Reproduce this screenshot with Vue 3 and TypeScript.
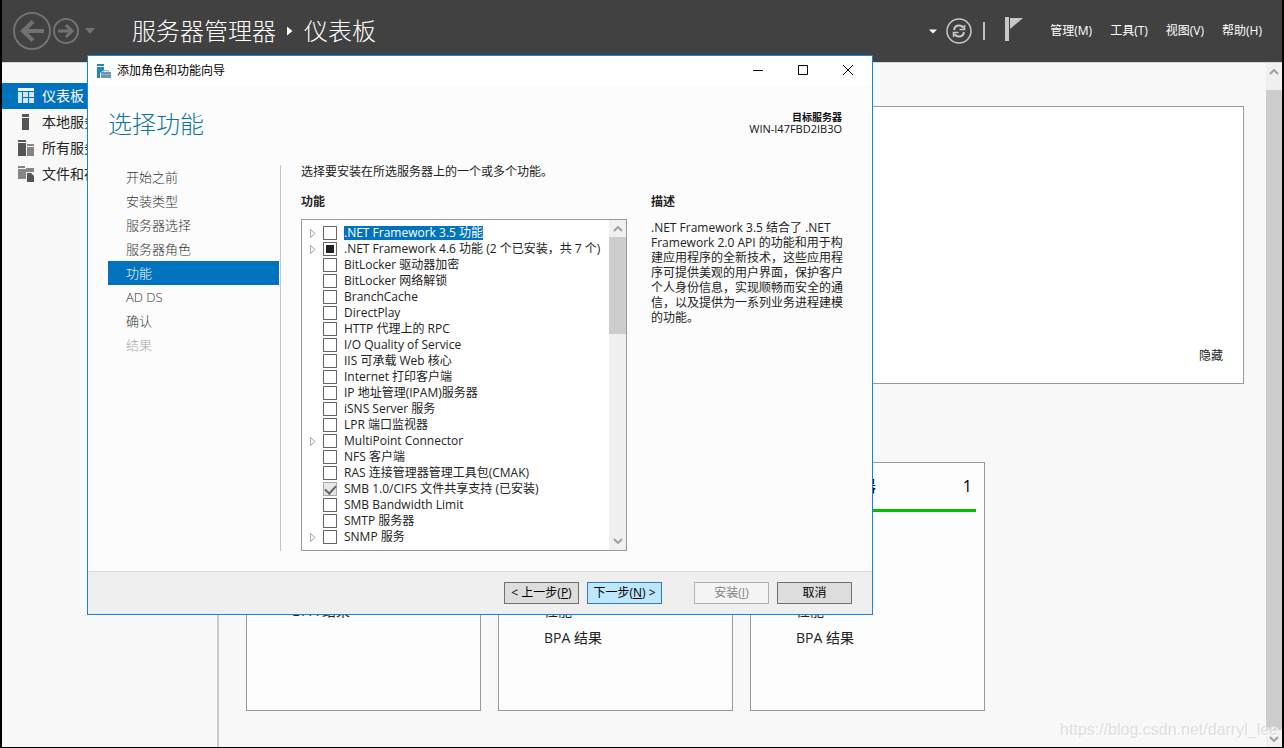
<script setup lang="ts">
interface Feature {
  label: string
  expandable?: boolean
  state?: 'partial' | 'installed'
  selected?: boolean
}

interface Card {
  id: string
  title?: string
  count?: number
  rows: string[]
}

const sidebarItems = [
  { label: '仪表板', icon: 'dashboard', active: true },
  { label: '本地服务器', icon: 'local', active: false },
  { label: '所有服务器', icon: 'all', active: false },
  { label: '文件和存储服务', icon: 'files', active: false },
]

const menus = ['管理(M)', '工具(T)', '视图(V)', '帮助(H)']

const cards: Card[] = [
  { id: 'storage', rows: ['BPA 结果'] },
  { id: 'local', rows: ['性能', 'BPA 结果'] },
  { id: 'all', title: '所有服务器', count: 1, rows: ['性能', 'BPA 结果'] },
]

const steps = [
  { label: '开始之前' },
  { label: '安装类型' },
  { label: '服务器选择' },
  { label: '服务器角色' },
  { label: '功能', current: true },
  { label: 'AD DS' },
  { label: '确认' },
  { label: '结果', disabled: true },
]

const features: Feature[] = [
  { label: '.NET Framework 3.5 功能', expandable: true, selected: true },
  { label: '.NET Framework 4.6 功能 (2 个已安装，共 7 个)', expandable: true, state: 'partial' },
  { label: 'BitLocker 驱动器加密' },
  { label: 'BitLocker 网络解锁' },
  { label: 'BranchCache' },
  { label: 'DirectPlay' },
  { label: 'HTTP 代理上的 RPC' },
  { label: 'I/O Quality of Service' },
  { label: 'IIS 可承载 Web 核心' },
  { label: 'Internet 打印客户端' },
  { label: 'IP 地址管理(IPAM)服务器' },
  { label: 'iSNS Server 服务' },
  { label: 'LPR 端口监视器' },
  { label: 'MultiPoint Connector', expandable: true },
  { label: 'NFS 客户端' },
  { label: 'RAS 连接管理器管理工具包(CMAK)' },
  { label: 'SMB 1.0/CIFS 文件共享支持 (已安装)', state: 'installed' },
  { label: 'SMB Bandwidth Limit' },
  { label: 'SMTP 服务器' },
  { label: 'SNMP 服务', expandable: true },
]
</script>

<template>
  <div class="desktop">
    <header class="topbar">
      <button class="plain" type="button" aria-label="后退">
        <svg width="38" height="38" viewBox="0 0 38 38" fill="none" stroke="#727272">
          <circle cx="19" cy="19" r="18" stroke-width="2" />
          <path d="M31 19H10M20 9.500L10 19l10 9.500" stroke-width="4" />
        </svg>
      </button>
      <button class="plain forward" type="button" aria-label="前进">
        <svg width="26" height="26" viewBox="0 0 26 26" fill="none" stroke="#727272">
          <circle cx="13" cy="13" r="12" stroke-width="2" />
          <path d="M5 13h14M13 7l6 6-6 6" stroke-width="3" />
        </svg>
      </button>
      <button class="plain history" type="button" aria-label="历史记录">
        <svg width="10" height="6" viewBox="0 0 10 6"><path d="M0 0h10L5 6z" fill="#727272" /></svg>
      </button>
      <h1 class="crumbs">
        <span>服务器管理器</span>
        <svg width="6" height="10" viewBox="0 0 6 10"><path d="M0 0.500L5.500 5 0 9.500z" fill="#fff" /></svg>
        <span>仪表板</span>
      </h1>
      <div class="tools">
        <button class="plain" type="button" aria-label="刷新选项">
          <svg width="8" height="5" viewBox="0 0 8 5"><path d="M0 0.500h8L4 4.500z" fill="#fff" /></svg>
        </button>
        <button class="plain refresh" type="button" aria-label="刷新">
          <svg width="26" height="26" viewBox="0 0 26 26" fill="none" stroke="#c8c8c8">
            <circle cx="13" cy="13" r="12" stroke-width="1.500" />
            <path d="M8 12c.5-3 2.500-4.500 5-4.500 2 0 3.500.8 4.500 2.500M18 14c-.5 3-2.500 4.500-5 4.500-2 0-3.500-.8-4.500-2.500" stroke-width="2" />
            <path d="M18.500 7v4.500h-5M7.500 19v-4.500h5" stroke-width="1.500" />
          </svg>
        </button>
        <span class="divider"></span>
        <button class="plain flag" type="button" aria-label="通知">
          <svg width="18" height="24" viewBox="0 0 18 24"><path d="M0 0h4v24H0zM5 1h13L5 12z" fill="#c8c8c8" /></svg>
        </button>
        <nav class="menus">
          <button v-for="menu in menus" :key="menu" class="plain menu" type="button">{{ menu }}</button>
        </nav>
      </div>
    </header>

    <div class="workspace">
      <nav class="sidebar">
        <a v-for="item in sidebarItems" :key="item.label" href="#" class="side-item" :class="{ active: item.active }">
          <svg width="16" height="16" viewBox="0 0 16 16">
            <g v-if="item.icon === 'dashboard'">
              <path d="M0 0h16v3H0z" fill="#fff" />
              <path d="M0 4h4v11H0zM5 4h5v5H5zM11 4h5v5h-5zM5 10h5v5H5zM11 10h5v5h-5z" fill="#d3e6f5" />
            </g>
            <path v-else-if="item.icon === 'local'" d="M4 0h7v3H4zM4 4h7v12H4z" fill="#555" />
            <g v-else-if="item.icon === 'all'">
              <path d="M0 0h8v2H0zM0 3h8v13H0z" fill="#555" />
              <path d="M9 4h7v2H9zM9 7h7v9H9z" fill="#858585" />
            </g>
            <g v-else>
              <path d="M0 0h7v2H0zM0 3h8v10H0zM8 2h8v4H8z" fill="#858585" />
              <path d="M9 7h4l3 3v6H9z" fill="#555" />
              <path d="M9 6.500h4.500L16 9" fill="none" stroke="#eee" />
            </g>
          </svg>
          <span>{{ item.label }}</span>
        </a>
      </nav>

      <main class="dashboard">
        <section class="welcome">
          <button class="plain hide" type="button">隐藏</button>
        </section>
        <section class="cards">
          <article v-for="card in cards" :key="card.id" class="card">
            <header class="card-head">
              <span v-if="card.title">{{ card.title }}</span>
              <span v-if="card.count">{{ card.count }}</span>
            </header>
            <ul class="card-rows">
              <li v-for="row in card.rows" :key="row">{{ row }}</li>
            </ul>
          </article>
        </section>
      </main>

      <div class="scrollbar page-scroll">
        <svg width="10" height="6" viewBox="0 0 10 6"><path d="M1 5l4-4 4 4" /></svg>
        <span class="thumb"></span>
        <svg width="10" height="6" viewBox="0 0 10 6"><path d="M1 1l4 4 4-4" /></svg>
      </div>
    </div>

    <section class="wizard" role="dialog" aria-labelledby="wizard-title">
      <header class="titlebar">
        <svg width="14" height="14" viewBox="0 0 14 14">
          <path d="M0 0h7v2H0zM0 3h7v3L3 9v5H0z" fill="#1b87c9" />
          <path d="M4 8h10v6H4z" fill="#6c98ae" />
          <path d="M6.500 8V6.500h5V8M4 10.500h10" fill="none" stroke="#8fb0c0" />
        </svg>
        <span id="wizard-title" class="window-name">添加角色和功能向导</span>
        <div class="window-buttons">
          <button class="plain" type="button" aria-label="最小化">
            <svg width="12" height="12" viewBox="0 0 12 12"><path d="M1 5.500h10" /></svg>
          </button>
          <button class="plain" type="button" aria-label="最大化">
            <svg width="12" height="12" viewBox="0 0 12 12"><path d="M1.500 0.500h9v9h-9z" /></svg>
          </button>
          <button class="plain" type="button" aria-label="关闭">
            <svg width="12" height="12" viewBox="0 0 12 12"><path d="M1 0l10 10M11 0L1 10" /></svg>
          </button>
        </div>
      </header>

      <div class="heading">
        <h2>选择功能</h2>
        <p class="target"><strong>目标服务器</strong><span>WIN-I47FBD2IB3O</span></p>
      </div>

      <div class="wizard-body">
        <nav class="steps">
          <button
            v-for="step in steps"
            :key="step.label"
            type="button"
            class="step"
            :class="{ current: step.current }"
            :disabled="step.disabled"
          >{{ step.label }}</button>
        </nav>
        <div class="content">
          <p class="intro">选择要安装在所选服务器上的一个或多个功能。</p>
          <div class="columns">
            <section class="feature-column">
              <h3>功能</h3>
              <div class="listbox">
                <ul class="features">
                  <li v-for="(feature, index) in features" :key="feature.label">
                    <span class="expander">
                      <button v-if="feature.expandable" class="plain" type="button" aria-label="展开">
                        <svg width="6" height="9" viewBox="0 0 6 9">
                          <path d="M0.500 0.500L5 4.500 0.500 8.500z" fill="#fff" stroke="#a6a6a6" />
                        </svg>
                      </button>
                    </span>
                    <input
                      :id="`feature-${index}`"
                      type="checkbox"
                      class="check"
                      :class="feature.state"
                      :checked="feature.state === 'installed'"
                      :disabled="feature.state === 'installed'"
                    />
                    <label :for="`feature-${index}`" :class="{ selected: feature.selected }">{{ feature.label }}</label>
                  </li>
                </ul>
                <div class="scrollbar list-scroll">
                  <svg width="10" height="6" viewBox="0 0 10 6"><path d="M1 5l4-4 4 4" /></svg>
                  <span class="thumb"></span>
                  <svg width="10" height="6" viewBox="0 0 10 6"><path d="M1 1l4 4 4-4" /></svg>
                </div>
              </div>
            </section>
            <section class="description">
              <h3>描述</h3>
              <p>.NET Framework 3.5 结合了 .NET Framework 2.0 API 的功能和用于构建应用程序的全新技术，这些应用程序可提供美观的用户界面，保护客户个人身份信息，实现顺畅而安全的通信，以及提供为一系列业务进程建模的功能。</p>
            </section>
          </div>
        </div>
      </div>

      <footer class="actions">
        <button type="button" class="action">&lt; 上一步(<u>P</u>)</button>
        <button type="button" class="action primary">下一步(<u>N</u>) &gt;</button>
        <button type="button" class="action install" disabled>安装(<u>I</u>)</button>
        <button type="button" class="action">取消</button>
      </footer>
    </section>

    <span class="watermark">https://blog.csdn.net/darryl_lee</span>
  </div>
</template>

<style>
body {
  margin: 0;
}
</style>

<style scoped>
* {
  box-sizing: border-box;
}

.desktop {
  position: relative;
  display: flex;
  flex-direction: column;
  min-height: 100vh;
  border: solid #000;
  border-width: 0 2px 1px;
  background: #f8f8f8;
  color: #222;
  font: 12px/16px "Open Sans", "Noto Sans CJK SC", sans-serif;
  overflow: hidden;
}

h1,
h2,
h3,
p,
ul {
  margin: 0;
  padding: 0;
  list-style: none;
}

svg {
  display: block;
  flex: none;
}

.plain {
  padding: 0;
  border: 0;
  background: none;
  color: inherit;
  font: inherit;
}

.topbar {
  display: flex;
  align-items: center;
  height: 62px;
  padding: 0 20px 0 11px;
  background: #414141;
  color: #fff;
}

.forward {
  margin-left: 2px;
}

.history {
  margin-left: 6px;
}

.crumbs {
  display: flex;
  align-items: center;
  gap: 11px;
  margin-left: 37px;
  font-size: 24px;
  font-weight: 300;
  line-height: 32px;
}

.tools {
  display: flex;
  align-items: center;
  margin-left: auto;
}

.refresh {
  margin-left: 9px;
}

.divider {
  width: 2px;
  height: 18px;
  margin-left: 11px;
  background: #c0c0c0;
}

.flag {
  margin: 0 27px 4px 20px;
}

.menus {
  display: flex;
  gap: 18px;
}

.workspace {
  display: flex;
  flex: 1;
  border-top: 1px solid #d8d8d8;
}

.sidebar {
  width: 217px;
  padding-top: 20px;
  border-right: 2px solid #ccc;
}

.side-item {
  display: flex;
  align-items: center;
  gap: 8px;
  height: 26px;
  padding-left: 16px;
  color: #222;
  font-size: 14px;
  text-decoration: none;
}

.side-item.active {
  background: #0072be;
  color: #fff;
}

.dashboard {
  flex: 1;
  padding: 43px 22px 35px 27px;
}

.welcome {
  display: flex;
  align-items: flex-end;
  justify-content: flex-end;
  height: 278px;
  padding: 19px 20px;
  border: 1px solid #999;
  background: #fff;
}

.cards {
  display: flex;
  gap: 17px;
  margin-top: 78px;
}

.card {
  flex: 0 1 235px;
  height: 249px;
  padding: 0 8px;
  border: 1px solid #999;
  background: #fdfdfd;
}

.card-head {
  display: flex;
  align-items: center;
  justify-content: space-between;
  height: 49px;
  padding: 0 4px 0 37px;
  border-bottom: 3px solid #00c000;
  color: #000;
  font-size: 16px;
}

.card-rows {
  padding: 85px 0 0 37px;
  font-size: 14px;
  line-height: 27px;
}

.scrollbar {
  display: flex;
  flex-direction: column;
  align-items: center;
  background: #f0f0f0;
}

.scrollbar path {
  fill: none;
  stroke: #a0a0a0;
  stroke-width: 2;
}

.thumb {
  width: 100%;
  background: #cdcdcd;
}

.page-scroll {
  width: 16px;
  padding: 6px 0 5px;
}

.page-scroll .thumb {
  flex: 1;
  margin: 15px 0 6px;
}

.wizard {
  position: absolute;
  top: 55px;
  right: 409px;
  left: 85px;
  border: 1px solid #1883d7;
  background: #fcfcfc;
}

.titlebar {
  display: flex;
  align-items: center;
  height: 30px;
  padding: 0 18px 0 9px;
  background: #fff;
  color: #000;
}

.window-name {
  margin-left: 6px;
}

.window-buttons {
  display: flex;
  gap: 33px;
  margin-left: auto;
}

.window-buttons button {
  width: 12px;
  height: 12px;
}

.window-buttons path {
  fill: none;
  stroke: #000;
}

.heading {
  display: flex;
  justify-content: space-between;
  height: 79px;
  padding: 22px 30px 0 20px;
}

.heading h2 {
  color: #0b769d;
  font-size: 24px;
  font-weight: 300;
  line-height: 32px;
}

.target {
  display: flex;
  flex-direction: column;
  padding-top: 3px;
  color: #111;
  font-size: 11px;
  line-height: 12px;
  text-align: right;
}

.target strong {
  font-size: 10px;
}

.wizard-body {
  display: flex;
  padding: 0 20px;
}

.steps {
  display: flex;
  flex: none;
  flex-direction: column;
  width: 173px;
  padding-right: 1px;
  border-right: 1px solid #c8c8c8;
}

.step {
  height: 24px;
  padding: 0 18px;
  border: 0;
  background: none;
  color: #333;
  font: 300 13px/24px "Open Sans", "Noto Sans CJK SC", sans-serif;
  text-align: left;
}

.step.current {
  background: #0072be;
  color: #fff;
}

.step:disabled {
  color: #aaa;
}

.content {
  flex: 1;
  padding-left: 20px;
}

.intro {
  height: 28px;
  line-height: 14px;
}

.columns {
  display: flex;
  gap: 24px;
}

h3 {
  height: 26px;
  font-size: 12px;
  font-weight: 700;
  line-height: 18px;
}

.feature-column {
  flex: 1;
}

.listbox {
  display: flex;
  border: 1px solid #999;
  background: #fff;
}

.features {
  flex: 1;
  padding: 5px 0 5px 8px;
}

.features li {
  display: flex;
  align-items: center;
  height: 16px;
  white-space: nowrap;
}

.expander {
  display: flex;
  width: 13px;
}

.check {
  flex: none;
  width: 14px;
  height: 14px;
  margin: 0 7px 0 0;
  border: 1px solid #666;
  background: #fff;
  appearance: none;
}

.check.partial {
  padding: 2px;
  background: #222 content-box;
}

.check.installed {
  display: grid;
  place-items: center;
  border-color: #aaa;
  background: #e6e6e6;
}

.check.installed::before {
  width: 9px;
  height: 5px;
  border: solid #666;
  border-width: 0 0 2px 2px;
  content: "";
  transform: translateY(-1px) rotate(-48deg);
}

.features label {
  line-height: 14px;
}

.features .selected {
  background: #0072be;
  color: #fff;
}

.list-scroll {
  flex: none;
  width: 17px;
  padding: 6px 0;
}

.list-scroll .thumb {
  height: 97px;
  margin: 5px 0 auto;
}

.description {
  flex: 0 0 201px;
}

.description p {
  padding-top: 1px;
  line-height: 15px;
}

.actions {
  display: flex;
  justify-content: flex-end;
  gap: 8px;
  margin-top: 20px;
  padding: 10px 20px;
  border-top: 1px solid #dcdcdc;
  background: #efefef;
}

.action {
  width: 75px;
  height: 22px;
  padding: 0;
  border: 1px solid #707070;
  background: #ddd;
  color: #000;
  font: inherit;
  line-height: 20px;
  white-space: nowrap;
}

.action.primary {
  border-color: #2c7fb5;
  background: #bee6fd;
}

.action.install {
  margin-left: 24px;
  border-color: #adb2b5;
  background: #f4f4f4;
  color: #838383;
}

.watermark {
  position: absolute;
  right: 4px;
  bottom: 8px;
  color: #dedede;
  font: 16px/18px "Liberation Sans", Arial, sans-serif;
  text-shadow: 1px 1px #fff;
}
</style>
